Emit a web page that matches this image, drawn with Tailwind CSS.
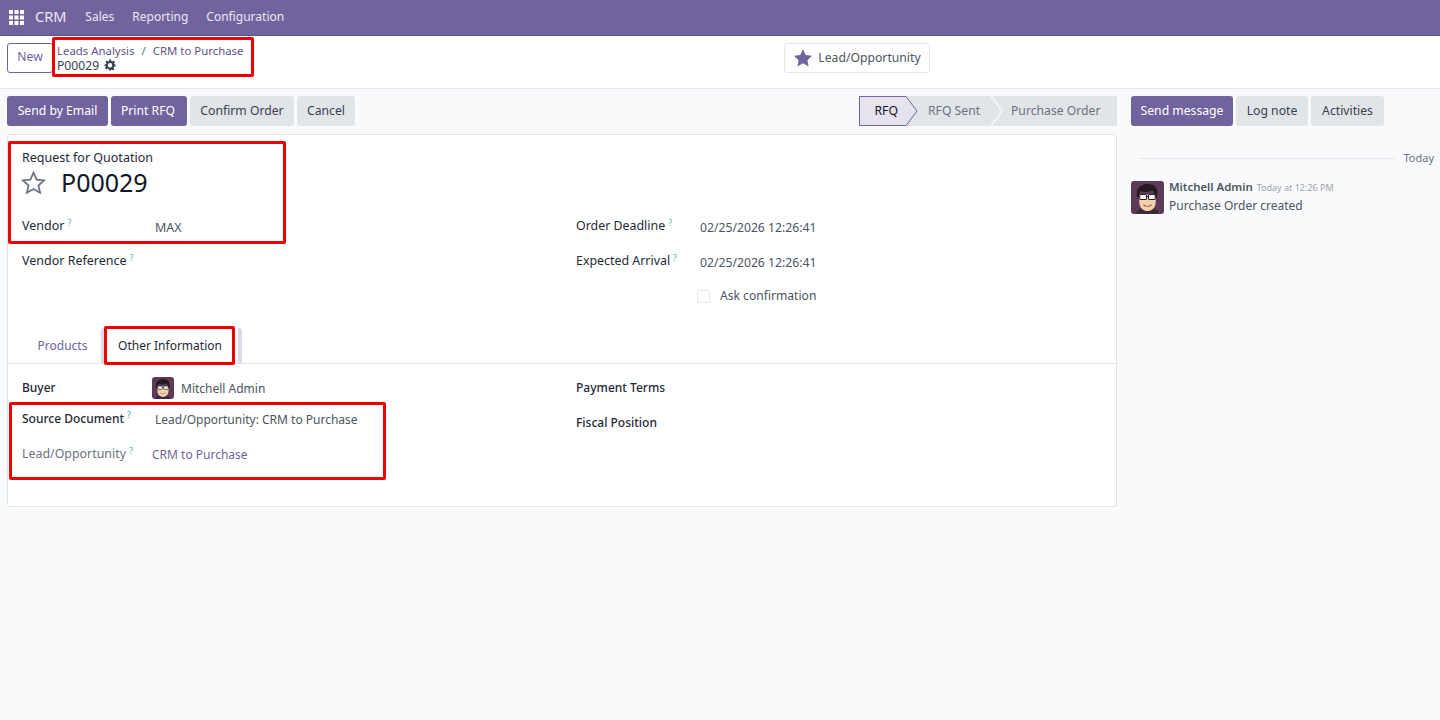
<!DOCTYPE html>
<html lang="en">
<head>
    <meta charset="UTF-8">
    <title>P00029 - CRM</title>
    <script src="https://cdn.jsdelivr.net/npm/@tailwindcss/browser@4"></script>
</head>
<body class="bg-white font-['Noto_Sans',sans-serif] text-[12.2px] text-[#374151]">
<div class="relative h-[720px] w-[1440px] overflow-hidden">
    <!-- navbar -->
    <nav class="flex h-[36px] items-center border-b border-[#5f5288] bg-[#71639e] text-[12px] text-white/85">
        <svg class="ml-[9px] h-[15px] w-[15px]" viewBox="0 0 15 15" fill="#fff">
            <rect x="0" y="0" width="4" height="4"/><rect x="5.5" y="0" width="4" height="4"/><rect x="11" y="0" width="4" height="4"/>
            <rect x="0" y="5.5" width="4" height="4"/><rect x="5.5" y="5.5" width="4" height="4"/><rect x="11" y="5.5" width="4" height="4"/>
            <rect x="0" y="11" width="4" height="4"/><rect x="5.5" y="11" width="4" height="4"/><rect x="11" y="11" width="4" height="4"/>
        </svg>
        <span class="ml-[11px] -mt-[1px] text-[14.5px]">CRM</span>
        <span class="ml-[19px] -mt-[1px]">Sales</span>
        <span class="ml-[18px] -mt-[1px]">Reporting</span>
        <span class="ml-[18px] -mt-[1px]">Configuration</span>
    </nav>

    <!-- control panel -->
    <div class="relative flex h-[53px] items-center border-b border-[#e5e7eb] bg-white pb-[9px] pl-[7px]">
        <button class="h-[30px] w-[46px] rounded-[3px] border border-[#71639e] text-[#71639e]">New</button>
        <div class="ml-[4px] leading-[15px]">
            <div class="text-[11.4px] text-[#5f5288]"><span>Leads Analysis</span><span class="mx-[7px] text-gray-500">/</span><span>CRM to Purchase</span></div>
            <div class="flex items-center gap-[5px]">P00029
                <svg class="h-[12px] w-[12px]" viewBox="0 0 24 24" fill="#374151"><path fill-rule="evenodd" d="M10 1h4l.6 3.2 1.9.8 2.7-1.9 2.8 2.8-1.9 2.7.8 1.9L23 11v4l-3.100.6-.8 1.900 1.900 2.700-2.800 2.800-2.700-1.900-1.900.8L13.900 23h-4l-.6-3.100-1.900-.8-2.700 1.900-2.800-2.800 1.900-2.700-.8-1.900L1 15v-4l3.200-.6.8-1.900L3.100 5.800l2.800-2.800 2.700 1.900 1.900-.8zM12 8a4.500 4.500 0 1 0 0 9 4.500 4.500 0 0 0 0-9z"/></svg>
            </div>
        </div>
        <button class="absolute left-[784px] top-[7px] flex h-[30px] w-[146px] items-center justify-center gap-[5px] rounded-[3px] border border-[#e5e7eb] text-[#4b5563]">
            <svg class="h-[20px] w-[20px]" viewBox="0 0 24 24" fill="#71639e"><path d="M12 1.500l3.300 6.900 7.500 1-5.500 5.200 1.400 7.500L12 18.400l-6.700 3.700 1.400-7.500L1.200 9.400l7.500-1z"/></svg>
            Lead/Opportunity
        </button>
    </div>

    <!-- main area -->
    <div class="flex h-[631px] bg-[#f9fafb]">
        <div class="ml-[7px] w-[1110px]">
            <!-- action row -->
            <div class="mt-[7px] flex h-[30px] items-stretch justify-between">
                <div class="flex gap-[3px]">
                    <button class="w-[101px] rounded-[3px] bg-[#71639e] text-white">Send by Email</button>
                    <button class="w-[76px] rounded-[3px] bg-[#71639e] pr-[2px] text-white">Print RFQ</button>
                    <button class="w-[104px] rounded-[3px] bg-[#e2e5e8] text-[#374151]">Confirm Order</button>
                    <button class="w-[58px] rounded-[3px] bg-[#e2e5e8] text-[#374151]">Cancel</button>
                </div>
                <!-- status bar -->
                <svg class="h-[30px] w-[258px]" viewBox="0 0 258 30" role="img" aria-label="RFQ, RFQ Sent, Purchase Order">
                    <rect x="30" y="0" width="228" height="30" fill="#e2e5e8"/>
                    <path d="M.5 .5H47l11 14.500L47 29.500H.5z" fill="#e6e3ef" stroke="#71639e"/>
                    <path d="M132 0l11 15-11 15" fill="none" stroke="#f5f6f7" stroke-width="1.500"/>
                    <text x="15.500" y="19" font-family="Noto Sans" font-size="12.2" fill="#111827">RFQ</text>
                    <text x="69" y="19" font-family="Noto Sans" font-size="12.2" fill="#6b7280">RFQ Sent</text>
                    <text x="152" y="19" font-family="Noto Sans" font-size="12.2" fill="#6b7280">Purchase Order</text>
                </svg>
            </div>

            <!-- sheet -->
            <div class="mt-[8px] h-[373px] rounded-[3px] border border-[#e2e5e8] bg-white">
                <div class="px-[14px] pt-[14px]">
                    <div class="text-[12.5px] leading-[17px] text-[#1f2937]">Request for Quotation</div>
                    <div class="flex h-[32px] items-center">
                        <svg class="-ml-[1px] h-[25px] w-[25px]" viewBox="0 0 24 24" fill="none" stroke="#6b7280" stroke-width="1.700" stroke-linejoin="miter"><path d="M12 2.500l3 6.700 7.200.8-5.400 4.800 1.500 7.100L12 18.300l-6.300 3.600 1.500-7.100L1.800 10 9 9.200z"/></svg>
                        <span class="ml-[15px] text-[25px] leading-none text-[#111827]">P00029</span>
                    </div>
                    <div class="mt-[11px] grid grid-cols-[554px_1fr]">
                        <div>
                            <div class="flex h-[35px] items-center">
                                <span class="w-[133px] text-[12.5px] text-[#1f2937]">Vendor<sup class="ml-[3px] text-[9px] text-[#017e84]/70">?</sup></span>
                                <span class="mt-[4px] text-[12.5px] text-[#4b5563]">MAX</span>
                            </div>
                            <div class="flex h-[35px] items-center">
                                <span class="text-[12.5px] text-[#1f2937]">Vendor Reference<sup class="ml-[3px] text-[9px] text-[#017e84]/70">?</sup></span>
                            </div>
                        </div>
                        <div>
                            <div class="flex h-[35px] items-center">
                                <span class="w-[124px] text-[12.4px] text-[#1f2937]">Order Deadline<sup class="ml-[3px] text-[9px] text-[#017e84]/70">?</sup></span>
                                <span class="mt-[4px] text-[#4b5563]">02/25/2026 12:26:41</span>
                            </div>
                            <div class="flex h-[35px] items-center">
                                <span class="w-[124px] text-[12.4px] text-[#1f2937]">Expected Arrival<sup class="ml-[3px] text-[9px] text-[#017e84]/70">?</sup></span>
                                <span class="mt-[4px] text-[#4b5563]">02/25/2026 12:26:41</span>
                            </div>
                            <div class="mt-[2px] flex h-[31px] items-center pl-[121px]">
                                <span class="h-[13px] w-[13px] rounded-[2px] border border-[#e5e7eb] bg-white"></span>
                                <span class="ml-[10px] text-[12.1px] text-[#4b5563]">Ask confirmation</span>
                            </div>
                        </div>
                    </div>
                </div>

                <!-- tabs -->
                <div class="mt-[16px] flex h-[36px] items-stretch border-b border-[#e2e5e8] pl-[15px]">
                    <div class="flex w-[78px] items-center justify-center pl-[1px] pt-[1px] text-[12px] text-[#71639e]">Products</div>
                    <div class="flex w-[141px] items-center justify-center rounded-t-[3px] border-x-[4px] border-[#dcdae6] bg-white pr-[3px] pt-[1px] text-[12px] text-[#1f2937]">Other Information</div>
                </div>

                <div class="grid grid-cols-[554px_1fr] px-[14px] pt-[9px]">
                    <div>
                        <div class="flex h-[30px] items-center">
                            <span class="w-[130px] text-[12px] font-medium text-[#1f2937]">Buyer</span>
                            <svg class="h-[22px] w-[22px] rounded-[3px]" viewBox="0 0 32 32"><rect width="32" height="32" fill="#5c3a58"/><path d="M5 32c1-5 5-6 11-6s10 1 11 6z" fill="#3b2a3a"/><path d="M8 13h16v7c0 6-4 9-8 9s-8-3-8-9z" fill="#f6cfa9"/><path d="M6 16C4 8 9 3 16 3c8 0 11 5 9 13l-2-1c0-3-1-5-2-6-4 2-8 2-12 1-1 1-1 3-1 5z" fill="#231a20"/><rect x="8.500" y="13" width="6.500" height="5" rx="1" fill="#fff" stroke="#222"/><rect x="17" y="13" width="6.500" height="5" rx="1" fill="#fff" stroke="#222"/><path d="M15 15h2" stroke="#222"/><path d="M12 23q4 3 8 0" stroke="#a05a45" fill="#fff"/></svg>
                            <span class="ml-[7px] mt-[2px] text-[12px] text-[#4b5563]">Mitchell Admin</span>
                        </div>
                        <div class="flex h-[31px] items-center">
                            <span class="w-[133px] text-[12px] font-medium text-[#1f2937]">Source Document<sup class="ml-[3px] text-[9px] text-[#017e84]/70">?</sup></span>
                            <span class="mt-[2px] text-[12px] text-[#4b5563]">Lead/Opportunity: CRM to Purchase</span>
                        </div>
                        <div class="flex h-[41px] items-center">
                            <span class="w-[130px] text-[12.4px] text-[#6b7280]">Lead/Opportunity<sup class="ml-[3px] text-[9px] text-[#017e84]/70">?</sup></span>
                            <span class="text-[12px] text-[#71639e]">CRM to Purchase</span>
                        </div>
                    </div>
                    <div class="text-[12px] font-medium text-[#1f2937]">
                        <div class="flex h-[30px] items-center">Payment Terms</div>
                        <div class="flex h-[40px] items-center">Fiscal Position</div>
                    </div>
                </div>
            </div>
        </div>

        <!-- chatter -->
        <div class="ml-[14px] flex-1 pr-[6px]">
            <div class="mt-[7px] flex h-[30px] gap-[3px]">
                <button class="w-[102px] rounded-[3px] bg-[#71639e] text-white">Send message</button>
                <button class="w-[72px] rounded-[3px] bg-[#e2e5e8] text-[#374151]">Log note</button>
                <button class="w-[73px] rounded-[3px] bg-[#e2e5e8] text-[#374151]">Activities</button>
            </div>
            <div class="mt-[24px] flex h-[16px] items-center pl-[8px]">
                <div class="h-px flex-1 bg-[#e5e7eb]"></div>
                <span class="ml-[8px] text-[11px] text-[#6b7280]">Today</span>
            </div>
            <div class="mt-[15px] flex">
                <svg class="h-[33px] w-[33px] rounded-[3px]" viewBox="0 0 32 32"><rect width="32" height="32" fill="#5c3a58"/><path d="M5 32c1-5 5-6 11-6s10 1 11 6z" fill="#3b2a3a"/><path d="M8 13h16v7c0 6-4 9-8 9s-8-3-8-9z" fill="#f6cfa9"/><path d="M6 16C4 8 9 3 16 3c8 0 11 5 9 13l-2-1c0-3-1-5-2-6-4 2-8 2-12 1-1 1-1 3-1 5z" fill="#231a20"/><rect x="8.500" y="13" width="6.500" height="5" rx="1" fill="#fff" stroke="#222"/><rect x="17" y="13" width="6.500" height="5" rx="1" fill="#fff" stroke="#222"/><path d="M15 15h2" stroke="#222"/><path d="M12 23q4 3 8 0" stroke="#a05a45" fill="#fff"/></svg>
                <div class="ml-[5px]">
                    <div class="-mt-[2px] leading-[15px]"><span class="text-[11.4px] font-semibold text-[#4b5563]">Mitchell Admin</span><span class="ml-[4px] text-[9px] text-[#9ca3af]">Today at 12:26 PM</span></div>
                    <div class="mt-[2px] text-[12px] leading-[18px] text-[#4b5563]">Purchase Order created</div>
                </div>
            </div>
        </div>
    </div>

    <!-- red annotation boxes -->
    <div class="absolute left-[52px] top-[37px] h-[40px] w-[202px] rounded-[2px] border-[3px] border-[#f00000]"></div>
    <div class="absolute left-[8px] top-[141px] h-[103px] w-[278px] rounded-[2px] border-[3px] border-[#f00000]"></div>
    <div class="absolute left-[104px] top-[326px] h-[39px] w-[131px] rounded-[2px] border-[3px] border-[#f00000]"></div>
    <div class="absolute left-[9px] top-[402px] h-[78px] w-[377px] rounded-[2px] border-[3px] border-[#f00000]"></div>
</div>
</body>
</html>
